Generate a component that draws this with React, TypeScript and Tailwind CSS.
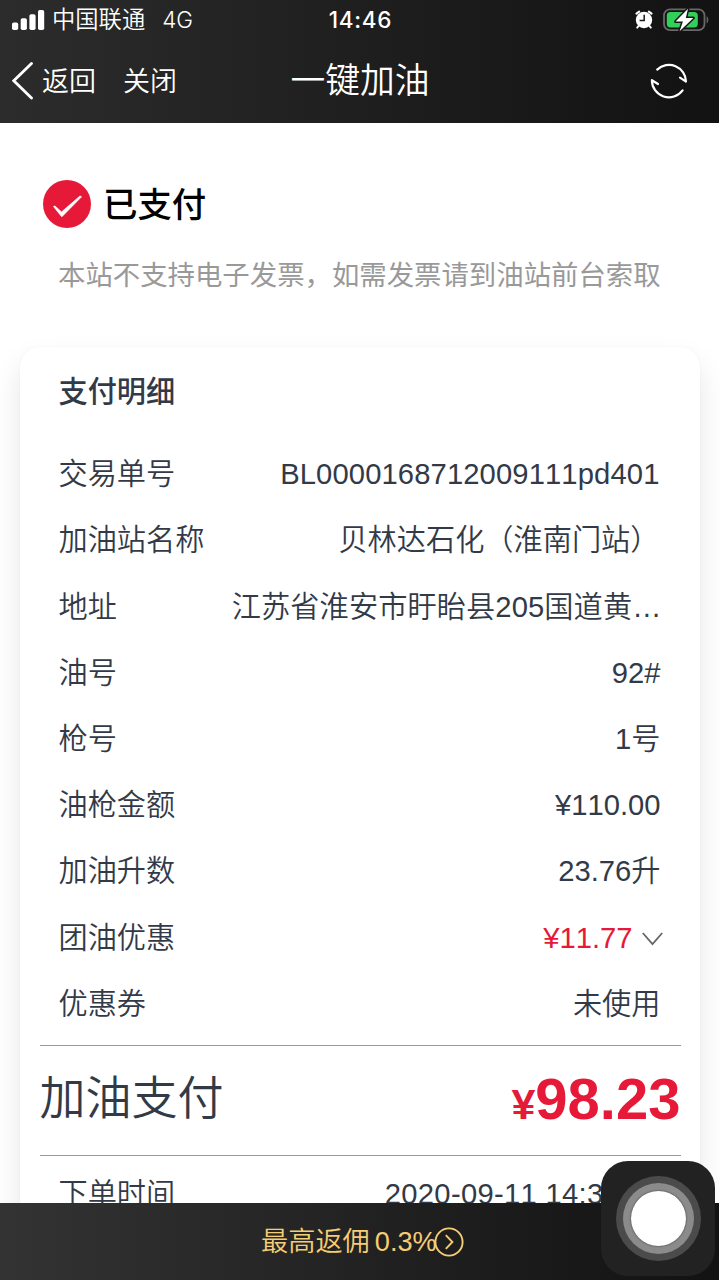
import clsx from "clsx";

type DetailRow = {
  label: string;
  value: string;
  valueClass?: string;
  expandable?: boolean;
};

const details: DetailRow[] = [
  { label: "交易单号", value: "BL0000168712009111pd401", valueClass: "mr-0.5 tracking-[0.12px]" },
  { label: "加油站名称", value: "贝林达石化（淮南门站）", valueClass: "mr-0.5" },
  { label: "地址", value: "江苏省淮安市盱眙县205国道黄…", valueClass: "tracking-[0.1px]" },
  { label: "油号", value: "92#", valueClass: "mr-px" },
  { label: "枪号", value: "1号", valueClass: "mr-px" },
  { label: "油枪金额", value: "¥110.00", valueClass: "mr-px" },
  { label: "加油升数", value: "23.76升", valueClass: "mr-px" },
  { label: "团油优惠", value: "¥11.77", expandable: true },
  { label: "优惠券", value: "未使用", valueClass: "mr-px" },
];

function SignalIcon() {
  return (
    <svg width="33" height="21" viewBox="0 0 33 21" fill="#fff">
      <rect x="0" y="12.5" width="6.2" height="7.5" rx="1.8" />
      <rect x="8.7" y="8.3" width="6.2" height="11.7" rx="1.8" />
      <rect x="17.4" y="4.2" width="6.2" height="15.8" rx="1.8" />
      <rect x="26" y="0" width="6.2" height="20" rx="1.8" />
    </svg>
  );
}

function AlarmIcon() {
  return (
    <svg width="18" height="20" viewBox="0 0 18 20" fill="none">
      <circle cx="9" cy="10" r="8.2" fill="#fff" />
      <path
        d="M1.4 3.6 4.2 1.6M16.6 3.6 13.8 1.6M3.4 16.2 2.2 17.6M14.6 16.2l1.2 1.4"
        stroke="#fff"
        strokeWidth="2"
        strokeLinecap="round"
      />
      <path d="M9.2 4.8v5.6H4.6" stroke="#1a1a1a" strokeWidth="1.5" />
    </svg>
  );
}

function BatteryIcon() {
  return (
    <svg width="46" height="26" viewBox="0 0 46 26" fill="none">
      <rect x="1" y="2.3" width="40.5" height="20.8" rx="6" stroke="#68686a" strokeWidth="1.8" />
      <path d="M43.6 9.3c2.3 1 2.3 6 0 7z" fill="#68686a" />
      <rect x="3.8" y="5" width="31" height="15.4" rx="3.6" fill="#30d158" />
      <path
        d="M25 1.8 12.6 14.6h7.3l-3.3 9.6L30.4 11h-7.6z"
        fill="#fff"
        stroke="#161616"
        strokeWidth="3"
        strokeLinejoin="round"
        paintOrder="stroke"
      />
    </svg>
  );
}

function RefreshIcon() {
  return (
    <svg
      width="38"
      height="38"
      viewBox="0 0 38 38"
      fill="none"
      stroke="#fff"
      strokeWidth="2.2"
      strokeLinecap="round"
      strokeLinejoin="round"
    >
      <path d="M7.2 7.6A17 17 0 0 1 36 19.6L30 15.6" />
      <path d="M32.6 28.4A17 17 0 0 1 1.9 18.2L8 22" />
    </svg>
  );
}

function Header() {
  return (
    <header className="h-[123px] w-[719px] shrink-0 bg-gradient-to-r from-[#2c2c2c] to-[#121212] text-white">
      <div className="grid h-10 grid-cols-3 items-center pl-3 pr-2.5">
        <div className="flex items-center text-[23.3px]">
          <SignalIcon />
          <span className="ml-[7px] pt-px">中国联通</span>
          <span className="ml-[17px] font-[Inter] text-[22.5px] font-light">4G</span>
        </div>
        <span className="text-center font-[Inter] text-[22.5px] font-medium tracking-[0.7px]">
          14:46
        </span>
        <div className="flex items-center justify-end gap-2.5">
          <AlarmIcon />
          <BatteryIcon />
        </div>
      </div>
      <div className="grid h-[82px] grid-cols-3 items-center pl-3 pr-[31px]">
        <div className="flex items-center text-[27px]">
          <svg width="22" height="38" viewBox="0 0 22 38" fill="none" stroke="#fff" strokeWidth="2.8">
            <path d="M19.5 1.5 1.8 18.8 19.5 36" strokeLinecap="round" />
          </svg>
          <span className="ml-2 pt-0.5">返回</span>
          <span className="ml-[27px] pt-0.5">关闭</span>
        </div>
        <h1 className="pl-5 text-center text-[34.8px]">一键加油</h1>
        <div className="flex justify-end">
          <RefreshIcon />
        </div>
      </div>
    </header>
  );
}

function PaidStatus() {
  return (
    <section className="h-[224px] shrink-0 pt-[57px]">
      <div className="flex h-12 items-center pl-[43px]">
        <svg width="48" height="48" viewBox="0 0 48 48">
          <circle cx="24" cy="24" r="24" fill="#e61938" />
          <path
            d="M10.5 26.5 12 26 18.5 32 37 16 38.5 16.8 18.8 36.8z"
            fill="#fff"
            stroke="#fff"
            strokeWidth="0.8"
            strokeLinejoin="round"
          />
        </svg>
        <h2 className="ml-3 pt-1 text-[34.4px] font-medium text-black">已支付</h2>
      </div>
      <p className="mt-[28px] whitespace-nowrap pl-[58px] text-[27.4px] font-normal leading-[40px] text-[#999999]">
        本站不支持电子发票，如需发票请到油站前台索取
      </p>
    </section>
  );
}

function DetailItem({ label, value, valueClass, expandable }: DetailRow) {
  return (
    <li className="flex h-[66.2px] items-center justify-between">
      <span>{label}</span>
      <span
        className={clsx(
          "flex items-center whitespace-nowrap",
          expandable && "-mr-px text-[#e61938]",
          valueClass,
        )}
      >
        {value}
        {expandable && (
          <svg
            className="ml-[9px] mt-0.5"
            width="21"
            height="14"
            viewBox="0 0 21 14"
            fill="none"
            stroke="#666"
            strokeWidth="1.8"
          >
            <path d="M.8 1 10.5 12.2 20.2 1" />
          </svg>
        )}
      </span>
    </li>
  );
}

function PaymentCard() {
  return (
    <section className="mx-5 h-[1000px] shrink-0 rounded-[20px] bg-white px-[19.5px] text-[29.2px] text-[#323a48] shadow-[0_16px_30px_rgba(0,0,0,0.1),0_0_2px_rgba(0,0,0,0.05)]">
      <div className="px-[19px] pt-[2px]">
        <h3 className="flex h-[93px] items-center pb-[6px] font-medium">支付明细</h3>
        <ul>
          {details.map((row) => (
            <DetailItem key={row.label} {...row} />
          ))}
        </ul>
      </div>
      <div className="mt-[7px] flex h-[111px] items-center justify-between border-y border-[#999] pb-1">
        <span className="text-[46px]">加油支付</span>
        <span className="flex items-baseline font-bold text-[#e61938]">
          <span className="text-[43px]">¥</span>
          <span className="text-[58px]">98.23</span>
        </span>
      </div>
      <div className="flex h-[78px] items-center justify-between px-[19px]">
        <span>下单时间</span>
        <span className="tracking-[0.3px]">2020-09-11 14:38:12</span>
      </div>
    </section>
  );
}

function RebateBar() {
  return (
    <footer className="relative flex h-[77px] w-[719px] shrink-0 items-center bg-gradient-to-r from-[#333333] to-[#121212] pl-[261px] text-[27.2px] text-[#f4cd75]">
      <span className="pt-0.5">最高返佣</span>
      <span className="ml-[5px] pt-0.5">0.3%</span>
      <svg
        className="-ml-[3px]"
        width="30"
        height="30"
        viewBox="0 0 30 30"
        fill="none"
        stroke="currentColor"
        strokeWidth="1.9"
      >
        <circle cx="15" cy="15" r="13.6" />
        <path d="M11.8 8.2 18.4 15l-6.6 6.8" />
      </svg>
    </footer>
  );
}

/** Floating touch button that sits over the page. */
function AssistiveTouch() {
  return (
    <div className="absolute bottom-1 right-[5px] flex h-[115px] w-[114px] items-center justify-center rounded-[27px] bg-[#222222]">
      <div className="flex size-[85px] items-center justify-center rounded-full bg-[#4b4b4b]">
        <div className="flex size-[71px] items-center justify-center rounded-full bg-[#8b8b8b]">
          <div className="size-[55px] rounded-full bg-white shadow-[0_0_2px_rgba(0,0,0,0.7)]" />
        </div>
      </div>
    </div>
  );
}

export default function App() {
  return (
    <div className="relative flex h-[1280px] w-[720px] flex-col overflow-hidden bg-white font-['Liberation_Sans','Noto_Sans_CJK_SC',sans-serif] font-[350] [font-kerning:none]">
      <Header />
      <main className="flex min-h-0 flex-1 flex-col overflow-hidden">
        <PaidStatus />
        <PaymentCard />
      </main>
      <RebateBar />
      <AssistiveTouch />
    </div>
  );
}
